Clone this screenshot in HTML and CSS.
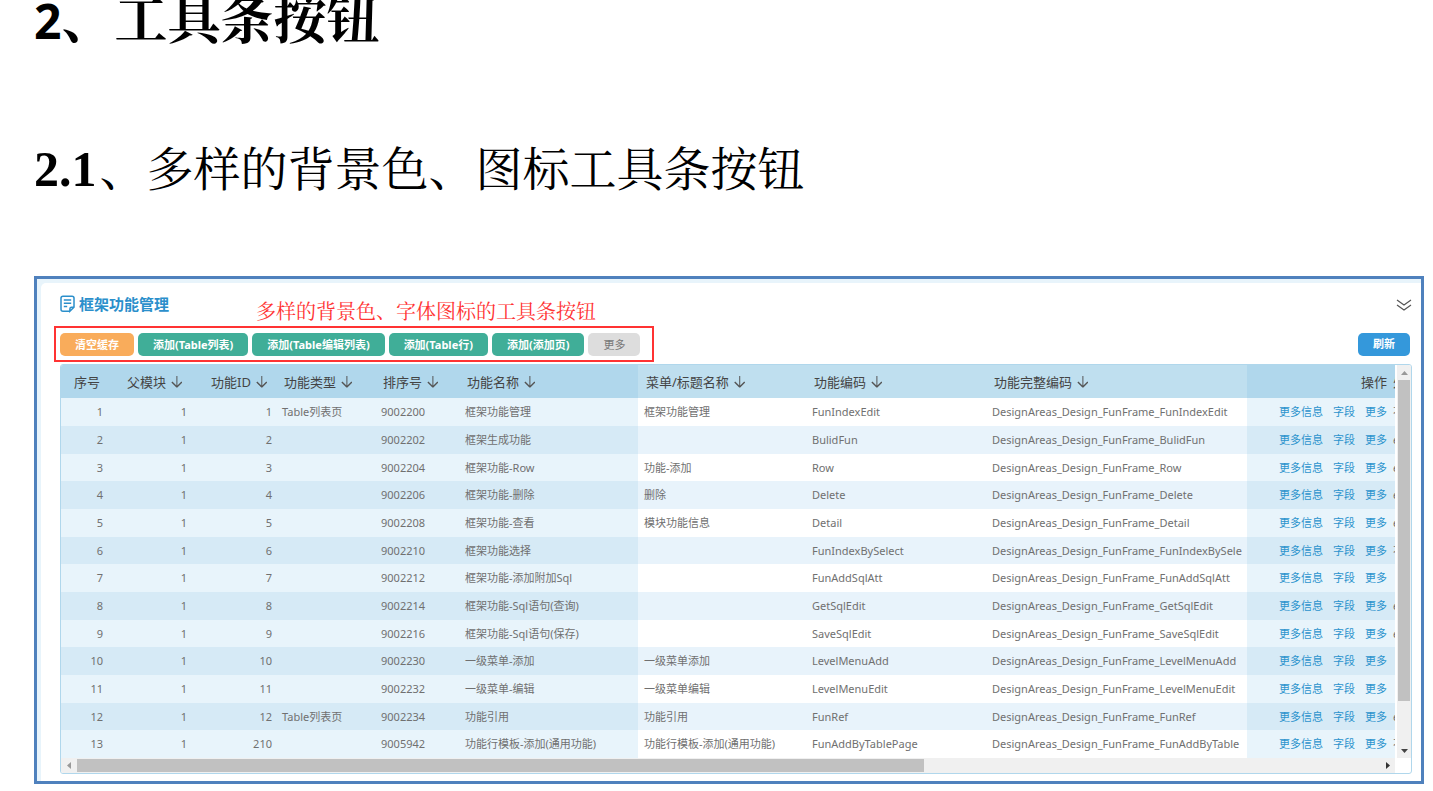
FILE: index.html
```html
<!DOCTYPE html>
<html lang="zh-CN">
<head>
<meta charset="utf-8">
<title>工具条按钮</title>
<link rel="stylesheet" href="styles.css">
</head>
<body>
<main class="doc">
<h1 class="h1"><span class="h1-num">2</span>、工具条按钮</h1>
<h2 class="h2"><span class="h2-num">2.1</span>、多样的背景色、图标工具条按钮</h2>
<section class="frame">
<div class="panel">
<header class="panel-head">
<svg class="doc-icon" viewBox="0 0 16 18" width="16" height="18" fill="none" stroke="currentColor" stroke-width="1.5"><path d="M9.5 16.2H3Q1 16.2 1 14.2V3Q1 1.2 3 1.2H12Q14 1.2 14 3V12.2L9.9 16.2V13.8Q9.9 12.2 11.6 12.2H14M3.8 5H11.2M3.8 8.3H11.2M3.8 11.6H7.2"/></svg>
<h3 class="title">框架功能管理</h3>
<p class="note">多样的背景色、字体图标的工具条按钮</p>
<button class="collapse" type="button" aria-label="展开"><svg viewBox="0 0 16 12" width="16" height="12" fill="none" stroke="#555" stroke-width="1.2"><path d="M1 1L8 6L15 1M1 6L8 11L15 6"/></svg></button>
</header>
<div class="toolbar">
<div class="marked">
<button class="btn" type="button" data-tone="orange">清空缓存</button>
<button class="btn" type="button">添加(Table列表)</button>
<button class="btn" type="button">添加(Table编辑列表)</button>
<button class="btn" type="button">添加(Table行)</button>
<button class="btn" type="button">添加(添加页)</button>
<button class="btn" type="button" data-tone="grey">更多</button>
</div>
<button class="btn" type="button" data-tone="blue">刷新</button>
</div>
<div class="grid-box">
<table class="table">
<colgroup><col class="c1"><col class="c2"><col class="c3"><col class="c4"><col class="c5"><col class="c6"><col class="c7"><col class="c8"><col class="c9"><col class="c10"><col class="c11"></colgroup>
<thead><tr><th class="num-head">序号</th><th class="wide">父模块 <i class="sort"></i></th><th class="wide">功能ID <i class="sort"></i></th><th>功能类型 <i class="sort"></i></th><th>排序号 <i class="sort"></i></th><th>功能名称 <i class="sort"></i></th><th class="mid">菜单/标题名称 <i class="sort"></i></th><th class="mid">功能编码 <i class="sort"></i></th><th class="mid">功能完整编码 <i class="sort"></i></th><th class="ops">操作</th><th class="cut">处</th></tr></thead>
<tbody>
<tr><td class="n">1</td><td class="n">1</td><td class="n">1</td><td>Table列表页</td><td>9002200</td><td>框架功能管理</td><td class="mid">框架功能管理</td><td class="mid">FunIndexEdit</td><td class="mid">DesignAreas_Design_FunFrame_FunIndexEdit</td><td class="ops"><a href="#">更多信息</a><a href="#">字段</a><a href="#">更多</a></td><td class="cut">不</td></tr>
<tr><td class="n">2</td><td class="n">1</td><td class="n">2</td><td></td><td>9002202</td><td>框架生成功能</td><td class="mid"></td><td class="mid">BulidFun</td><td class="mid">DesignAreas_Design_FunFrame_BulidFun</td><td class="ops"><a href="#">更多信息</a><a href="#">字段</a><a href="#">更多</a></td><td class="cut">e</td></tr>
<tr><td class="n">3</td><td class="n">1</td><td class="n">3</td><td></td><td>9002204</td><td>框架功能-Row</td><td class="mid">功能-添加</td><td class="mid">Row</td><td class="mid">DesignAreas_Design_FunFrame_Row</td><td class="ops"><a href="#">更多信息</a><a href="#">字段</a><a href="#">更多</a></td><td class="cut">e</td></tr>
<tr><td class="n">4</td><td class="n">1</td><td class="n">4</td><td></td><td>9002206</td><td>框架功能-删除</td><td class="mid">删除</td><td class="mid">Delete</td><td class="mid">DesignAreas_Design_FunFrame_Delete</td><td class="ops"><a href="#">更多信息</a><a href="#">字段</a><a href="#">更多</a></td><td class="cut">e</td></tr>
<tr><td class="n">5</td><td class="n">1</td><td class="n">5</td><td></td><td>9002208</td><td>框架功能-查看</td><td class="mid">模块功能信息</td><td class="mid">Detail</td><td class="mid">DesignAreas_Design_FunFrame_Detail</td><td class="ops"><a href="#">更多信息</a><a href="#">字段</a><a href="#">更多</a></td><td class="cut">e</td></tr>
<tr><td class="n">6</td><td class="n">1</td><td class="n">6</td><td></td><td>9002210</td><td>框架功能选择</td><td class="mid"></td><td class="mid">FunIndexBySelect</td><td class="mid">DesignAreas_Design_FunFrame_FunIndexBySele</td><td class="ops"><a href="#">更多信息</a><a href="#">字段</a><a href="#">更多</a></td><td class="cut">不</td></tr>
<tr><td class="n">7</td><td class="n">1</td><td class="n">7</td><td></td><td>9002212</td><td>框架功能-添加附加Sql</td><td class="mid"></td><td class="mid">FunAddSqlAtt</td><td class="mid">DesignAreas_Design_FunFrame_FunAddSqlAtt</td><td class="ops"><a href="#">更多信息</a><a href="#">字段</a><a href="#">更多</a></td><td class="cut"></td></tr>
<tr><td class="n">8</td><td class="n">1</td><td class="n">8</td><td></td><td>9002214</td><td>框架功能-Sql语句(查询)</td><td class="mid"></td><td class="mid">GetSqlEdit</td><td class="mid">DesignAreas_Design_FunFrame_GetSqlEdit</td><td class="ops"><a href="#">更多信息</a><a href="#">字段</a><a href="#">更多</a></td><td class="cut">e</td></tr>
<tr><td class="n">9</td><td class="n">1</td><td class="n">9</td><td></td><td>9002216</td><td>框架功能-Sql语句(保存)</td><td class="mid"></td><td class="mid">SaveSqlEdit</td><td class="mid">DesignAreas_Design_FunFrame_SaveSqlEdit</td><td class="ops"><a href="#">更多信息</a><a href="#">字段</a><a href="#">更多</a></td><td class="cut">e</td></tr>
<tr><td class="n">10</td><td class="n">1</td><td class="n">10</td><td></td><td>9002230</td><td>一级菜单-添加</td><td class="mid">一级菜单添加</td><td class="mid">LevelMenuAdd</td><td class="mid">DesignAreas_Design_FunFrame_LevelMenuAdd</td><td class="ops"><a href="#">更多信息</a><a href="#">字段</a><a href="#">更多</a></td><td class="cut"></td></tr>
<tr><td class="n">11</td><td class="n">1</td><td class="n">11</td><td></td><td>9002232</td><td>一级菜单-编辑</td><td class="mid">一级菜单编辑</td><td class="mid">LevelMenuEdit</td><td class="mid">DesignAreas_Design_FunFrame_LevelMenuEdit</td><td class="ops"><a href="#">更多信息</a><a href="#">字段</a><a href="#">更多</a></td><td class="cut"></td></tr>
<tr><td class="n">12</td><td class="n">1</td><td class="n">12</td><td>Table列表页</td><td>9002234</td><td>功能引用</td><td class="mid">功能引用</td><td class="mid">FunRef</td><td class="mid">DesignAreas_Design_FunFrame_FunRef</td><td class="ops"><a href="#">更多信息</a><a href="#">字段</a><a href="#">更多</a></td><td class="cut">e</td></tr>
<tr><td class="n">13</td><td class="n">1</td><td class="n">210</td><td></td><td>9005942</td><td>功能行模板-添加(通用功能)</td><td class="mid">功能行模板-添加(通用功能)</td><td class="mid">FunAddByTablePage</td><td class="mid">DesignAreas_Design_FunFrame_FunAddByTable</td><td class="ops"><a href="#">更多信息</a><a href="#">字段</a><a href="#">更多</a></td><td class="cut">不</td></tr>
</tbody>
</table>
<div class="vbar"><svg width="7" height="4" viewBox="0 0 7 4" fill="#999"><path d="M0 4L3.5 0L7 4Z"/></svg><div class="vthumb"></div><svg class="vdown" width="7" height="4" viewBox="0 0 7 4" fill="#444"><path d="M0 0L3.5 4L7 0Z"/></svg></div>
<div class="hbar"><svg width="4" height="7" viewBox="0 0 4 7" fill="#999"><path d="M4 0L0 3.5L4 7Z"/></svg><div class="htrack"><div class="hthumb"></div></div><svg width="4" height="7" viewBox="0 0 4 7" fill="#333"><path d="M0 0L4 3.5L0 7Z"/></svg></div>
</div>
</div>
</section>
</main>
</body>
</html>
```
FILE: styles.css
```css
* { box-sizing: border-box; }
body { margin: 0; background: #fff; overflow: hidden; font-family: "Noto Sans", "Noto Sans CJK SC", sans-serif; }
.doc { padding: 0 9px 0 34px; }
.h1, .h2 { margin: 0; color: #000; white-space: nowrap; }
.h1 { margin-top: -17px; font: 700 53px/66px "Noto Serif CJK SC", "Noto Sans CJK SC", serif; }
.h1-num { font: 700 48px/1 "Open Sans", sans-serif; }
.h2 { margin-top: 84px; font: 400 47px/66px "Noto Serif CJK SC", "Noto Sans CJK SC", serif; }
.h2-num { margin-right: 3px; font: 700 50px/1 "Liberation Serif", serif; }
.frame { margin-top: 77px; border: 3px solid #4f81bd; background: #e8f4fb; padding: 4px 0 0 4px; }
.panel { background: #fff; border-top-left-radius: 5px; padding: 11px 9px 7px 13px; }
.panel-head { display: flex; align-items: flex-start; padding-left: 6px; height: 32px; color: #2b8fcb; }
.doc-icon { margin-top: 1px; margin-right: 3px; }
.title { margin: 0; font-size: 15px; line-height: 20px; font-weight: 700; }
.note { margin: 3px 0 0 87px; font: 400 20px/28px "Noto Serif CJK SC", "Noto Sans CJK SC", serif; color: #ff3333; }
.collapse { margin-left: auto; margin-top: 5px; border: 0; padding: 0; background: none; line-height: 0; }
.toolbar { display: flex; align-items: center; justify-content: space-between; padding-right: 2px; }
.marked { display: flex; gap: 4px; border: 2px solid #f33; padding: 5px 12px 4px 4px; }
.btn { height: 23px; border: 0; border-radius: 5px; padding: 0 15px; font: 700 11px/22px "Noto Sans", "Noto Sans CJK SC", sans-serif; color: #fff; background: #40ae98; white-space: nowrap; }
.btn[data-tone="orange"] { background: #f9ac5b; }
.btn[data-tone="grey"] { background: #ddd; color: #777; font-weight: 400; }
.btn[data-tone="blue"] { background: #3498db; }
.grid-box { margin: 2px 0 0 6px; border: 1px solid #b0d7ec; border-radius: 3px; display: grid; grid-template-columns: minmax(0, 1fr) 16px; overflow: hidden; }
.table { width: 100%; table-layout: fixed; border-collapse: collapse; font-size: 11px; color: #707070; }
.c1 { width: 46px; } .c2 { width: 84px; } .c3 { width: 85px; } .c4 { width: 99px; } .c5 { width: 84px; } .c6 { width: 179px; } .c7 { width: 168px; } .c8 { width: 180px; } .c10 { width: 144px; } .c11 { width: 4px; }
th, td { overflow: hidden; white-space: nowrap; text-align: left; padding: 0 0 0 6px; font-weight: 400; }
th { height: 33px; line-height: 20px; padding-left: 8px; font-size: 13px; color: #444; background: #b0d7ec; }
th.mid { background: #bfdfef; }
.num-head { padding-left: 13px; }
.wide { padding-left: 20px; }
tbody tr { height: 28px; }
tbody tr:nth-child(3n) { height: 27px; }
td { line-height: 20px; background: #e8f4fb; }
td.mid { background: #fff; }
tr:nth-child(even) td { background: #d6eaf6; }
tr:nth-child(even) td.mid { background: #e8f3fb; }
td.n { text-align: right; padding: 0 4px 0 0; }
.ops { text-align: right; padding-right: 4px; }
.ops a { margin-left: 10px; color: #2b93cd; text-decoration: none; }
th.cut, td.cut { padding: 0 0 0 2px; text-overflow: clip; }
.sort { display: inline-block; margin-left: 2px; width: 11px; height: 12px; vertical-align: -1px; background: #555; clip-path: polygon(5px 0, 6px 0, 6px 10px, 10px 6px, 11px 7px, 6px 12px, 5px 12px, 0 7px, 1px 6px, 5px 10px); }
.vbar { display: flex; flex-direction: column; align-items: center; margin-left: 2px; padding: 6px 1px 5px; background: #f0f0f0; }
.vthumb { width: 100%; height: 84%; margin-top: 5px; background: #c1c1c1; }
.vdown { margin-top: auto; }
.hbar { display: flex; align-items: center; gap: 6px; height: 15px; padding: 0 5px 0 6px; background: #f0f0f0; }
.htrack { flex: 1; }
.hthumb { width: 65%; height: 13px; background: #c1c1c1; }
```
